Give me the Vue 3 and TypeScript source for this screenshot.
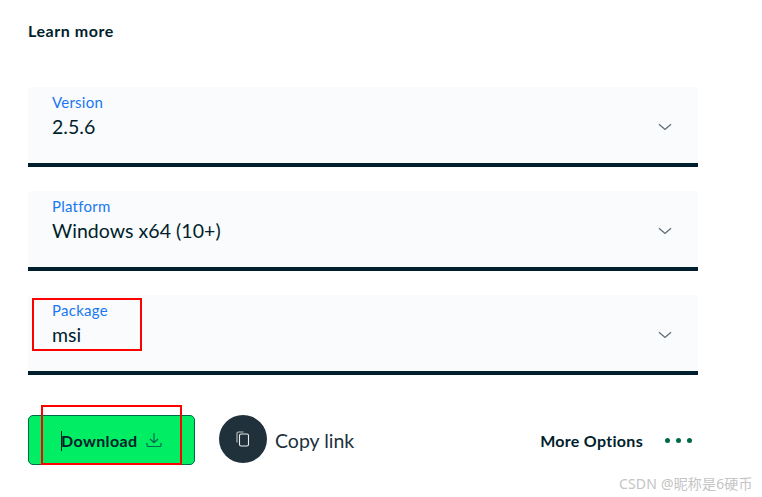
<script setup lang="ts">
interface Field { label: string; value: string }
const fields: Field[] = [
  { label: 'Version', value: '2.5.6' },
  { label: 'Platform', value: 'Windows x64 (10+)' },
  { label: 'Package', value: 'msi' },
]
</script>

<template>
  <div class="page">
    <a class="learn">Learn more</a>
    <div class="fields">
      <div v-for="f in fields" :key="f.label" class="select">
        <div class="texts">
          <span class="label">{{ f.label }}</span>
          <span class="value">{{ f.value }}</span>
        </div>
        <svg class="chev" width="14" height="8" viewBox="0 0 14 8" fill="none">
          <path d="M1 1.2 7 6.4 13 1.2" stroke="#5c6c75" stroke-width="1.3" />
        </svg>
      </div>
    </div>
    <div class="actions">
      <button class="download">
        <span class="caret"></span>
        <span>Download</span>
        <svg width="16" height="16" viewBox="0 0 16 16" fill="none" stroke="#00684a" stroke-width="1.2">
          <path d="M8 1v9.5M4 7l4 3.7L12 7" />
          <path d="M1 11v2.2c0 .8.6 1.3 1.3 1.3h11.4c.7 0 1.3-.5 1.3-1.3V11" />
        </svg>
      </button>
      <div class="copy">
        <span class="circle">
          <svg width="14" height="16" viewBox="0 0 14 16" fill="none" stroke="#e8edeb" stroke-width="1.1">
            <path d="M1 11.5V2.5C1 1.6 1.6 1 2.5 1h5" stroke="#b8c4c2" />
            <rect x="3.5" y="3" width="9" height="12" rx="1.6" />
          </svg>
        </span>
        <span class="copy-text">Copy link</span>
      </div>
      <div class="more">
        <span class="more-text">More Options</span>
        <span class="dots"><i></i><i></i><i></i></span>
      </div>
    </div>
    <div class="mark mark-package"></div>
    <div class="mark mark-download"></div>
    <div class="watermark">CSDN @昵称是6硬币</div>
  </div>
</template>

<style>
html, body { margin: 0; background: #fff; }
</style>

<style scoped>
.page {
  position: relative;
  width: 762px;
  height: 497px;
  overflow: hidden;
  box-sizing: border-box;
  padding: 21px 64px 0 28px;
  font-family: Lato, "Noto Sans", sans-serif;
  color: #001e2b;
}
.learn {
  display: block;
  height: 66px;
  font-size: 16px;
  line-height: 19px;
  font-weight: 700;
  letter-spacing: 0.55px;
}
.fields {
  display: flex;
  flex-direction: column;
  gap: 24px;
}
.select {
  height: 80px;
  box-sizing: border-box;
  background: #f9fbfd;
  border-bottom: 4px solid #001e2b;
  border-radius: 3px 3px 0 0;
  padding: 7px 26px 0 24px;
  display: flex;
  justify-content: space-between;
}
.texts { display: flex; flex-direction: column; }
.label {
  font-size: 15px;
  line-height: 17px;
  letter-spacing: 0.25px;
  color: #1a78f0;
}
.value {
  font-size: 19.5px;
  line-height: 28px;
  margin-top: 2px;
  letter-spacing: 0.05px;
}
.chev { margin-top: 29px; }
.actions {
  display: flex;
  align-items: flex-start;
  margin-top: 40px;
  height: 50px;
}
.download {
  width: 167px;
  height: 50px;
  box-sizing: border-box;
  background: #00ed64;
  border: 1px solid #00684a;
  border-radius: 5px;
  display: flex;
  align-items: center;
  gap: 8px;
  padding: 0 0 0 32px;
  position: relative;
  font: 700 16px Lato, "Noto Sans", sans-serif;
  letter-spacing: 0.4px;
  color: #001e2b;
}
.caret {
  position: absolute;
  left: 32px;
  top: 15px;
  width: 1px;
  height: 20px;
  background: #001e2b;
}
.copy {
  display: flex;
  align-items: center;
  gap: 8px;
  margin-left: 24px;
  height: 48px;
}
.circle {
  width: 48px;
  height: 48px;
  border-radius: 50%;
  background: #21313c;
  display: flex;
  align-items: center;
  justify-content: center;
}
.copy-text {
  font-size: 19.5px;
  color: #21313c;
  margin-top: 2px;
}
.more {
  margin-left: auto;
  display: flex;
  align-items: center;
  gap: 22px;
  padding-right: 6px;
  height: 50px;
}
.more-text {
  font-size: 16px;
  font-weight: 700;
  letter-spacing: 0.3px;
}
.dots { display: flex; gap: 6px; }
.dots i {
  display: block;
  width: 5px;
  height: 5px;
  border-radius: 50%;
  background: #00684a;
}
.mark {
  position: absolute;
  box-sizing: border-box;
  border: 2px solid #f00;
}
.mark-package { left: 32px; top: 298px; width: 110px; height: 53px; }
.mark-download { left: 41px; top: 405px; width: 141px; height: 60px; }
.watermark {
  position: absolute;
  left: 619px;
  top: 475px;
  font-family: "Noto Sans", "Noto Sans CJK SC", sans-serif;
  font-size: 14px;
  line-height: 18px;
  letter-spacing: 0.17px;
  color: #c4c4c4;
  white-space: nowrap;
}
</style>
